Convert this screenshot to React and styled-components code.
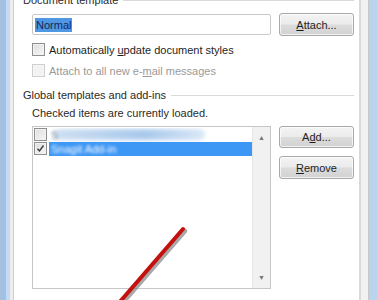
import React from 'react';
import styled, { createGlobalStyle } from 'styled-components';

const GlobalStyle = createGlobalStyle`
  html, body {
    margin: 0;
    padding: 0;
    background: #ffffff;
  }
  body {
    font-family: "Liberation Sans", Arial, sans-serif;
    font-size: 11px;
    color: #1e1e1e;
  }
`

const Window = styled.div`
  position: relative;
  display: flex;
  width: 377px;
  height: 300px;
  overflow: hidden;
  background: #ffffff;
`

const LeftFrame = styled.div`
  width: 14px;
  flex: none;
  background: linear-gradient(to right,
    #abc0d6 0, #abc0d6 2px,
    #9ec3ea 2px, #9ec3ea 6px,
    #c6dbf0 6px, #c6dbf0 10px,
    #ededed 10px, #ededed 13px,
    #cfcfcf 13px, #cfcfcf 14px);
`

const RightFrame = styled.div`
  width: 18px;
  flex: none;
  background: linear-gradient(to right,
    #d9d9d9 0, #d9d9d9 2px,
    #f1f1f1 2px, #f1f1f1 9px,
    #c9c9c9 9px, #c9c9c9 10px,
    #bad4ee 10px, #bad4ee 18px);
`

const Content = styled.div`
  flex: 1;
  display: flex;
  flex-direction: column;
  padding: 0 5px 0 9px;
`

const GroupTitle = styled.div`
  display: flex;
  align-items: center;
  gap: 5px;
  height: 14px;
  line-height: 14px;
  margin-top: ${p => p.$top}px;
  color: #2a2a2a;
  white-space: nowrap;

  &::after {
    content: "";
    flex: 1;
    height: 1px;
    background: #dadada;
  }
`

const GroupBody = styled.div`
  display: flex;
  flex-direction: column;
  padding-left: 9px;
`

const Row = styled.div`
  display: flex;
  align-items: ${p => p.$align || 'center'};
  gap: 8px;
  margin-top: ${p => p.$top}px;
`

const TextBox = styled.div`
  width: 239px;
  height: 21px;
  box-sizing: border-box;
  border: 1px solid #c9c9c9;
  border-radius: 2px;
  display: flex;
  align-items: center;
  padding-left: 2px;
  background: #fff;
`

const Selected = styled.span`
  background: #4f97e3;
  color: #14275c;
  line-height: 14px;
  padding: 0 1px;
`

const Button = styled.div`
  width: 75px;
  height: ${p => p.$h || 23}px;
  box-sizing: border-box;
  border: 1px solid #a9a9a9;
  border-radius: 3px;
  background: linear-gradient(to bottom, #f4f4f4 0%, #ebebeb 48%, #dcdcdc 52%, #d2d2d2 100%);
  box-shadow: inset 0 0 0 1px rgba(255,255,255,0.7);
  display: flex;
  align-items: center;
  justify-content: center;
  color: #1e1e1e;
  flex: none;
`

const U = styled.span`
  text-decoration: underline;
`

const CheckRow = styled.label`
  display: flex;
  align-items: center;
  gap: 4px;
  height: 13px;
  margin-top: ${p => p.$top}px;
  color: ${p => (p.$disabled ? '#9a9a9a' : '#1e1e1e')};
  white-space: nowrap;
`

const Box = styled.span`
  width: 13px;
  height: 13px;
  box-sizing: border-box;
  flex: none;
  border: 1px solid ${p => (p.$disabled ? '#cfcfcf' : '#8f8f8f')};
  background: ${p => (p.$disabled
    ? '#f3f3f3'
    : 'linear-gradient(135deg, #dedede 0%, #f6f6f6 100%)')};
  box-shadow: inset 0 0 0 1px ${p => (p.$disabled ? '#f6f6f6' : '#f2f2f2')};
  display: flex;
  align-items: center;
  justify-content: center;
`

const Hint = styled.div`
  margin-top: 4px;
  height: 14px;
  line-height: 14px;
  color: #2a2a2a;
  white-space: nowrap;
`

const ListBox = styled.div`
  width: 239px;
  height: 163px;
  box-sizing: border-box;
  border: 1px solid #c6c6c6;
  display: flex;
  background: #fff;
`

const ListItems = styled.div`
  flex: 1;
  display: flex;
  flex-direction: column;
  padding-top: 1px;
`

const ListRow = styled.div`
  display: flex;
  align-items: center;
  height: 13px;
  margin-bottom: 1px;
  padding-left: 1px;
  gap: 2px;
`

const ItemText = styled.span`
  flex: 1;
  height: 14px;
  line-height: 14px;
  padding-left: 2px;
  background: ${p => (p.$selected ? '#3d97f5' : 'transparent')};
  color: ${p => (p.$selected ? '#ffffff' : '#6a7f99')};
  position: relative;
  overflow: hidden;
`

const Smudge = styled.span`
  display: inline-block;
  filter: blur(1.4px);
  color: inherit;
`

const Blob = styled.span`
  position: absolute;
  left: 6px;
  top: 1px;
  width: 150px;
  height: 11px;
  border-radius: 6px;
  background: linear-gradient(to right, #c9dcf0, #9fc3ea 60%, #d6e6f6);
  filter: blur(2px);
  opacity: 0.9;
`

const ScrollBar = styled.div`
  width: 17px;
  flex: none;
  background: #f1f1f1;
  border-left: 1px solid #e6e6e6;
  display: flex;
  flex-direction: column;
  justify-content: space-between;
  align-items: center;
  padding: 7px 0 7px;
  color: #777;
  font-size: 7px;
  line-height: 7px;
`

const ButtonColumn = styled.div`
  display: flex;
  flex-direction: column;
  gap: 8px;
`

const Annotation = styled.svg`
  position: absolute;
  left: 0;
  top: 0;
  pointer-events: none;
`

function CheckMark() {
  return (
    <svg width="9" height="9" viewBox="0 0 9 9">
      <path d="M1.5 4.8 L3.5 7 L7.5 1.5" fill="none" stroke="#3a3a3a" strokeWidth="1.4" />
    </svg>
  );
}

export default function App() {
  return (
    <Window>
      <GlobalStyle />
      <LeftFrame />
      <Content>
        <GroupTitle $top={-7}>Document template</GroupTitle>
        <GroupBody>
          <Row $top={6}>
            <TextBox><Selected>Normal</Selected></TextBox>
            <Button><span><U>A</U>ttach...</span></Button>
          </Row>
          <CheckRow $top={7}>
            <Box />
            <span>Automatically <U>u</U>pdate document styles</span>
          </CheckRow>
          <CheckRow $top={8} $disabled>
            <Box $disabled />
            <span>Attach to all new e-<U>m</U>ail messages</span>
          </CheckRow>
        </GroupBody>
        <GroupTitle $top={11}>Global templates and add-ins</GroupTitle>
        <GroupBody>
          <Hint>Checked items are currently loaded.</Hint>
          <Row $top={6} $align="flex-start">
            <ListBox>
              <ListItems>
                <ListRow>
                  <Box />
                  <ItemText>
                    <Blob />
                    <Smudge>S</Smudge>
                  </ItemText>
                </ListRow>
                <ListRow>
                  <Box><CheckMark /></Box>
                  <ItemText $selected><Smudge>Snagit Add-in</Smudge></ItemText>
                </ListRow>
              </ListItems>
              <ScrollBar>
                <span>▲</span>
                <span>▼</span>
              </ScrollBar>
            </ListBox>
            <ButtonColumn>
              <Button $h={22}><span>A<U>d</U>d...</span></Button>
              <Button><span><U>R</U>emove</span></Button>
            </ButtonColumn>
          </Row>
        </GroupBody>
      </Content>
      <RightFrame />
      <Annotation width="377" height="300" viewBox="0 0 377 300">
        <line x1="185" y1="231" x2="120" y2="306" stroke="#7a7a7a" strokeOpacity="0.65" strokeWidth="4.5" strokeLinecap="round" />
        <line x1="183" y1="229" x2="118" y2="304" stroke="#c4110e" strokeWidth="4" strokeLinecap="round" />
      </Annotation>
    </Window>
  );
}
